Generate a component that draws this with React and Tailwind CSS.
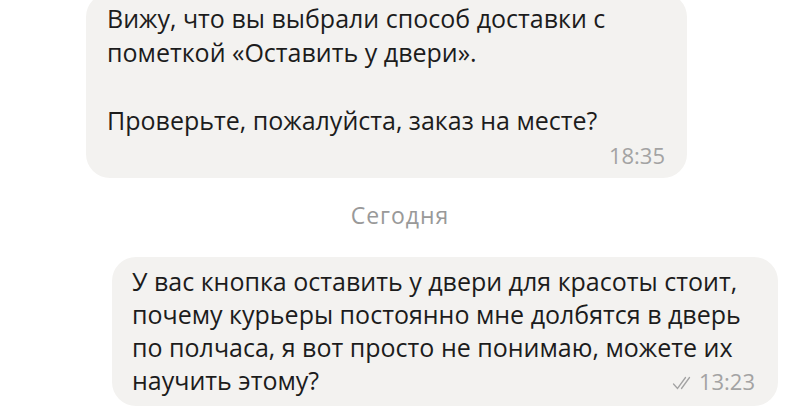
import React from 'react';

const incoming = {
  lines: [
    'Вижу, что вы выбрали способ доставки с',
    'пометкой «Оставить у двери».',
    '',
    'Проверьте, пожалуйста, заказ на месте?',
  ],
  time: '18:35',
};

const outgoing = {
  lines: [
    'У вас кнопка оставить у двери для красоты стоит,',
    'почему курьеры постоянно мне долбятся в дверь',
    'по полчаса, я вот просто не понимаю, можете их',
  ],
  last: 'научить этому?',
  time: '13:23',
};

function DoubleCheck() {
  return (
    <svg width="22" height="14" viewBox="0 0 22 14" fill="none" stroke="#a3a3a3" strokeWidth="1.3" strokeLinecap="round">
      <path d="M1.5 8 L5.5 12.5 L13.5 1.5" />
      <path d="M9.5 12.5 L17.5 1.5" />
    </svg>
  );
}

export default function App() {
  return (
    <div
      className="w-[800px] h-[417px] overflow-hidden bg-white text-[#1c1c1c]"
      style={{ fontFamily: '"Open Sans", "Noto Sans", sans-serif' }}
    >
      {/* incoming bubble */}
      <div className="ml-[86px] -mt-[7px] w-[601px] rounded-[24px] bg-[#f3f2f0] pl-[21px] pr-[22px] pt-[8px] pb-[13px]">
        <div className="text-[25px] leading-[34px]">
          {incoming.lines.map((l, i) => (
            <div key={i} className="h-[34px] whitespace-nowrap">{l}</div>
          ))}
        </div>
        <div className="mt-[8px] flex justify-end text-[22px] leading-[20px] text-[#a3a3a3]">
          {incoming.time}
        </div>
      </div>

      {/* date divider */}
      <div className="mt-[25px] flex justify-center text-[23px] leading-[24px] tracking-[1px] text-[#999999]">
        Сегодня
      </div>

      {/* outgoing bubble */}
      <div className="ml-[112px] mt-[30px] w-[666px] rounded-[24px] bg-[#f3f2f0] pl-[20px] pr-[23px] pt-[8px] pb-[8px]">
        <div className="text-[25px] leading-[33px]">
          {outgoing.lines.map((l, i) => (
            <div key={i} className="whitespace-nowrap">{l}</div>
          ))}
          <div className="flex items-baseline justify-between">
            <span>{outgoing.last}</span>
            <span className="flex items-baseline gap-[5px] text-[22px] text-[#a3a3a3]">
              <DoubleCheck />
              {outgoing.time}
            </span>
          </div>
        </div>
      </div>
    </div>
  );
}
